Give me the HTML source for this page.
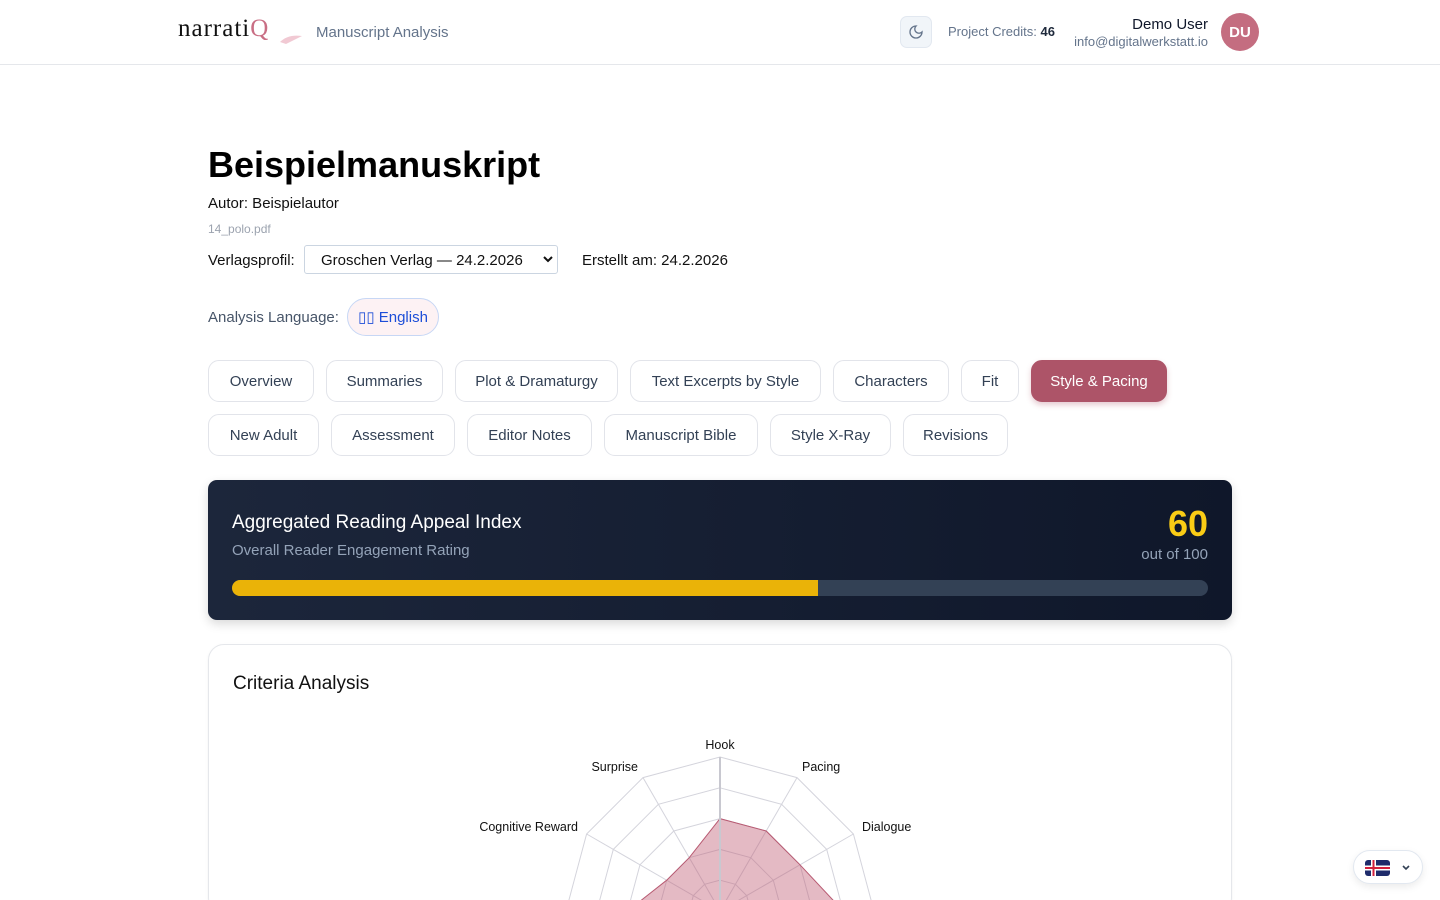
<!DOCTYPE html>
<html><head><meta charset="utf-8">
<style>
*{box-sizing:border-box;margin:0;padding:0}
html,body{width:1440px;height:900px;overflow:hidden}
body{background:#fff;font-family:"Liberation Sans",sans-serif;color:#111827;position:relative}
.hdr{position:absolute;left:0;top:0;width:1440px;height:65px;border-bottom:1px solid #e5e7eb}
.abs{position:absolute}
.tab{position:absolute;height:42px;border:1px solid #e2e4ea;border-radius:11px;background:#fff;font-size:15px;color:#334155;display:flex;align-items:center;justify-content:center;white-space:nowrap}
.tab.on{background:#ad5468;color:#fff;border-color:#ad5468;box-shadow:0 3px 6px rgba(173,84,104,.3)}
</style></head><body>
<div class="hdr">
  <div class="abs" style="left:178px;top:15px;font-family:'Liberation Serif',serif;font-size:25px;letter-spacing:1px;color:#111">narrati<span style="color:#c96e84">Q</span></div>
  <svg class="abs" style="left:278px;top:30px" width="26" height="16"><path d="M2 12 Q10 4 24 6 Q16 10 8 14Z" fill="#f1c9d3"/></svg>
  <div class="abs" style="left:316px;top:24px;font-size:15px;color:#64748b">Manuscript Analysis</div>
  <div class="abs" style="left:900px;top:16px;width:32px;height:32px;border:1px solid #e2e8f0;border-radius:7px;background:#f1f5f9"></div>
  <svg class="abs" style="left:908px;top:24px" width="16" height="16" viewBox="0 0 24 24" fill="none" stroke="#64748b" stroke-width="2" stroke-linecap="round"><path d="M12 3a6 6 0 0 0 9 9 9 9 0 1 1-9-9Z"/></svg>
  <div class="abs" style="left:948px;top:24px;font-size:13px;color:#64748b">Project Credits: <b style="color:#1e293b">46</b></div>
  <div class="abs" style="right:232px;top:16px;font-size:15px;color:#0f172a;text-align:right">Demo User</div>
  <div class="abs" style="right:232px;top:34px;font-size:13px;color:#64748b;text-align:right">info@digitalwerkstatt.io</div>
  <div class="abs" style="left:1221px;top:13px;width:38px;height:38px;border-radius:50%;background:#c46d80;color:#fff;font-size:15px;font-weight:bold;display:flex;align-items:center;justify-content:center">DU</div>
</div>

<div class="abs" style="left:208px;top:144px;font-size:36px;font-weight:bold;color:#000">Beispielmanuskript</div>
<div class="abs" style="left:208px;top:195px;font-size:15px;color:#111">Autor: Beispielautor</div>
<div class="abs" style="left:208px;top:222px;font-size:12px;color:#9ca3af">14_polo.pdf</div>
<div class="abs" style="left:208px;top:252px;font-size:15px;color:#111">Verlagsprofil:</div>
<div class="abs" style="left:304px;top:245px;width:254px;height:29px;border:1px solid #cbd5e1;border-radius:3px;font-size:15px;padding:6px 0 0 16px;color:#111">Groschen Verlag — 24.2.2026</div>
<svg class="abs" style="left:543px;top:255px" width="10" height="8"><path d="M1 2l4 4 4-4" stroke="#111" stroke-width="2" fill="none"/></svg>
<div class="abs" style="left:582px;top:252px;font-size:15px;color:#111">Erstellt am: 24.2.2026</div>
<div class="abs" style="left:208px;top:309px;font-size:15px;color:#475569">Analysis Language:</div>
<div class="abs" style="left:347px;top:298px;width:92px;height:38px;border:1px solid #c7d7f5;border-radius:19px;background:#fdf2f4;font-size:15px;color:#1d4ed8;display:flex;align-items:center;justify-content:center">▯▯&nbsp;English</div>

<div class="tab" style="left:208px;top:360px;width:106px">Overview</div>
<div class="tab" style="left:326px;top:360px;width:117px">Summaries</div>
<div class="tab" style="left:455px;top:360px;width:163px">Plot &amp; Dramaturgy</div>
<div class="tab" style="left:630px;top:360px;width:191px">Text Excerpts by Style</div>
<div class="tab" style="left:833px;top:360px;width:116px">Characters</div>
<div class="tab" style="left:961px;top:360px;width:58px">Fit</div>
<div class="tab on" style="left:1031px;top:360px;width:136px">Style &amp; Pacing</div>
<div class="tab" style="left:208px;top:414px;width:111px">New Adult</div>
<div class="tab" style="left:331px;top:414px;width:124px">Assessment</div>
<div class="tab" style="left:467px;top:414px;width:125px">Editor Notes</div>
<div class="tab" style="left:604px;top:414px;width:154px">Manuscript Bible</div>
<div class="tab" style="left:770px;top:414px;width:121px">Style X-Ray</div>
<div class="tab" style="left:903px;top:414px;width:105px">Revisions</div>

<div class="abs" style="left:208px;top:480px;width:1024px;height:140px;border-radius:9px;background:linear-gradient(90deg,#1c263b,#0f172a);box-shadow:0 4px 10px rgba(0,0,0,.15)">
  <div class="abs" style="left:24px;top:32px;font-size:19px;color:#fff">Aggregated Reading Appeal Index</div>
  <div class="abs" style="left:24px;top:62px;font-size:15px;color:#94a3b8">Overall Reader Engagement Rating</div>
  <div class="abs" style="right:24px;top:23px;font-size:36px;font-weight:bold;color:#facc15">60</div>
  <div class="abs" style="right:24px;top:66px;font-size:15px;color:#94a3b8">out of 100</div>
  <div class="abs" style="left:24px;top:100px;width:976px;height:16px;border-radius:8px;background:#334155;overflow:hidden"><div style="width:60%;height:100%;background:#eab308"></div></div>
</div>

<div class="abs" style="left:208px;top:644px;width:1024px;height:270px;border:1px solid #e5e7eb;border-radius:16px;box-shadow:0 1px 3px rgba(0,0,0,.05)">
  <div class="abs" style="left:24px;top:28px;font-size:19px;color:#111">Criteria Analysis</div>
</div>
<svg id="radar" class="abs" style="left:0;top:0" width="1440" height="900"></svg>
<div class="abs" style="left:1353px;top:850px;width:70px;height:34px;border:1px solid #e2e8f0;border-radius:17px;background:#fff;box-shadow:0 3px 8px rgba(0,0,0,.08)">
  <svg class="abs" style="left:11px;top:9px" width="25" height="16"><rect width="25" height="16" rx="3" fill="#1e2b6b"/><rect x="6" width="5" height="16" fill="#fff"/><rect y="5.5" width="25" height="5" fill="#fff"/><rect x="7.5" width="2" height="16" fill="#d21f3c"/><rect y="7" width="25" height="2" fill="#d21f3c"/></svg>
  <svg class="abs" style="left:47px;top:13px" width="10" height="8"><path d="M2 2l3 3 3-3" stroke="#334155" stroke-width="1.6" fill="none"/></svg>
</div>
<script>
var cx=720,cy=911,u=30.8,s='';
function p(i,r){var a=i*Math.PI/6;return [cx+r*Math.sin(a),cy-r*Math.cos(a)];}
for(var k=1;k<=5;k++){var pts=[];for(var i=0;i<12;i++){var q=p(i,k*u);pts.push(q[0].toFixed(1)+','+q[1].toFixed(1));}s+='<polygon points="'+pts.join(' ')+'" fill="none" stroke="#d4d4dc" stroke-width="1"/>';}
for(var i=0;i<12;i++){var q=p(i,5*u);s+='<line x1="'+cx+'" y1="'+cy+'" x2="'+q[0]+'" y2="'+q[1]+'" stroke="#d4d4dc"/>';}
var v=[3,3,3,4,3,2,3,2,3,3,2,2],pts=[];
for(var i=0;i<12;i++){var q=p(i,v[i]*u);pts.push(q[0].toFixed(1)+','+q[1].toFixed(1));}
s+='<polygon points="'+pts.join(' ')+'" fill="rgba(190,90,115,0.42)" stroke="#b85a72" stroke-width="1"/>';
s+='<line x1="720" y1="911" x2="720" y2="757" stroke="#c8c8d0" stroke-width="2"/>';
var L=[['Hook',720,749,'middle'],['Pacing',802,771,'start'],['Dialogue',862,831,'start'],['Surprise',638,771,'end'],['Cognitive Reward',578,831,'end']];
L.forEach(function(l){s+='<text x="'+l[1]+'" y="'+l[2]+'" font-size="12.5" font-family="Liberation Sans,sans-serif" fill="#111" text-anchor="'+l[3]+'">'+l[0]+'</text>';});
document.getElementById('radar').innerHTML=s;
</script>
</body></html>
